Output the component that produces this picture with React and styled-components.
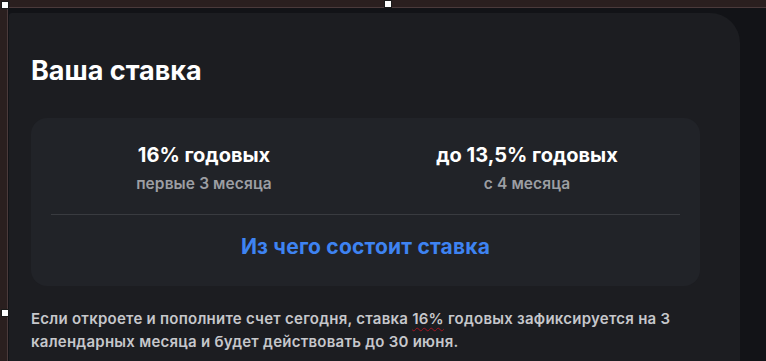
import React from 'react'
import styled, { createGlobalStyle } from 'styled-components'

const GlobalStyle = createGlobalStyle`
  html, body {
    margin: 0;
    padding: 0;
    background: #2a1f1f;
    overflow: hidden;
  }
  body {
    font-family: Inter, "Noto Sans", "Liberation Sans", sans-serif;
  }
`

const Canvas = styled.div`
  position: relative;
  width: 766px;
  height: 361px;
  padding: 7px 0 0 7px;
  box-sizing: border-box;
  background: #2a1f1f;
`

const Viewport = styled.div`
  height: 100%;
  box-sizing: border-box;
  border-top: 1px solid #4a3a3b;
  border-left: 1px solid #4a3a3b;
  background: #121317;
  padding: 5px 0 0 1px;
  overflow: hidden;
`

const Card = styled.section`
  width: 731px;
  height: 100%;
  box-sizing: border-box;
  background: #1c1d21;
  border-radius: 3px 30px 0 0;
  padding: 41px 40px 0 22px;
`

const Title = styled.h2`
  margin: 0 0 31px;
  font-size: 27px;
  font-weight: 700;
  line-height: normal;
  color: #ffffff;
`

const RateBox = styled.div`
  background: #212328;
  border-radius: 16px;
  padding: 25px 20px 27px;
`

const Columns = styled.div`
  display: grid;
  grid-template-columns: 1fr 1fr;
  column-gap: 17px;
  padding-bottom: 21px;
  border-bottom: 1px solid #393b40;
`

const Rate = styled.div`
  display: flex;
  flex-direction: column;
  align-items: center;
  gap: 7px;
`

const RateValue = styled.div`
  font-size: 20px;
  font-weight: 700;
  line-height: normal;
  color: #ffffff;
`

const RateNote = styled.div`
  font-size: 15.5px;
  font-weight: 600;
  line-height: normal;
  letter-spacing: 0.1px;
  color: #9c9ea3;
`

const Link = styled.a`
  display: block;
  margin-top: 19px;
  text-align: center;
  font-size: 21px;
  font-weight: 700;
  line-height: normal;
  letter-spacing: 0.2px;
  color: #3e83f2;
  text-decoration: none;
  cursor: pointer;
`

const Note = styled.p`
  margin: 21px 0 0;
  font-size: 15px;
  font-weight: 600;
  line-height: 23px;
  letter-spacing: 0.25px;
  color: #c6c7cb;
`

const Misspelled = styled.span`
  text-decoration: underline wavy #a3121f;
  text-decoration-thickness: 1px;
  text-underline-offset: 3px;
`

const Handle = styled.span`
  position: absolute;
  left: ${p => p.x}px;
  top: ${p => p.y}px;
  width: 6px;
  height: 6px;
  background: #ffffff;
  border: 1px solid #1a1a1a;
`

const rates = [
  { value: '16% годовых', note: 'первые 3 месяца' },
  { value: 'до 13,5% годовых', note: 'с 4 месяца' },
]

export default function App() {
  return (
    <>
      <GlobalStyle />
      <Canvas>
        <Viewport>
          <Card>
            <Title>Ваша ставка</Title>
            <RateBox>
              <Columns>
                {rates.map(r => (
                  <Rate key={r.value}>
                    <RateValue>{r.value}</RateValue>
                    <RateNote>{r.note}</RateNote>
                  </Rate>
                ))}
              </Columns>
              <Link>Из чего состоит ставка</Link>
            </RateBox>
            <Note>
              Если откроете и пополните счет сегодня, ставка{' '}
              <Misspelled>16%</Misspelled> годовых зафиксируется на 3
              календарных месяца и будет действовать до 30 июня.
            </Note>
          </Card>
        </Viewport>
        <Handle x={1} y={1} />
        <Handle x={384} y={0} />
        <Handle x={1} y={309} />
      </Canvas>
    </>
  )
}
